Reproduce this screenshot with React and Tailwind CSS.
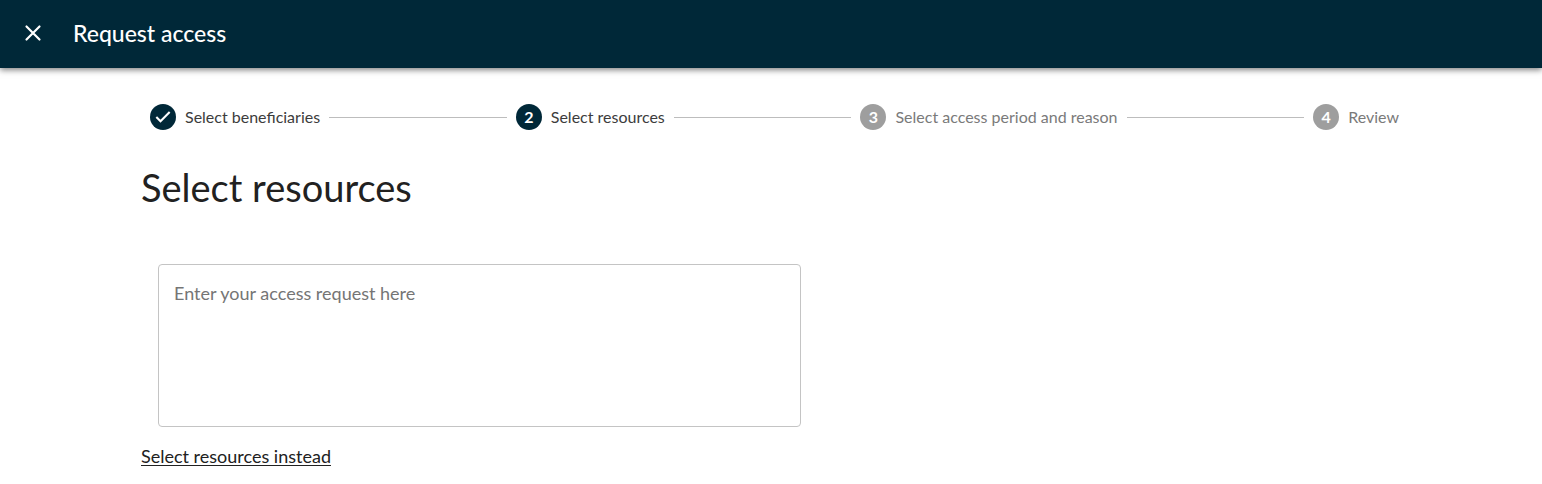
import React, { useState } from 'react';
import clsx from 'clsx';

const steps = [
  { label: 'Select beneficiaries', status: 'done' },
  { label: 'Select resources', status: 'active' },
  { label: 'Select access period and reason', status: 'pending' },
  { label: 'Review', status: 'pending' },
];

const CloseIcon = () => (
  <svg viewBox="0 0 24 24" className="h-6 w-6" fill="none" stroke="currentColor" strokeWidth="2.2" strokeLinecap="round" aria-hidden="true">
    <path d="M5.5 5.5l13 13M18.5 5.5l-13 13" />
  </svg>
);

const CheckIcon = () => (
  <svg viewBox="0 0 24 24" className="h-5 w-5" fill="none" stroke="currentColor" strokeWidth="2.5" aria-hidden="true">
    <path d="M4 12l5 5L20 6" />
  </svg>
);

const Step = ({ number, label, status }) => (
  <li
    className="flex shrink-0 items-center gap-[9px] px-[9px]"
    aria-current={status === 'active' ? 'step' : undefined}
  >
    <span
      className={clsx(
        'flex h-[26px] w-[26px] items-center justify-center rounded-full text-base font-bold text-white',
        status === 'pending' ? 'bg-[#9e9e9e]' : 'bg-[#002838]'
      )}
    >
      {status === 'done' ? <CheckIcon /> : number}
    </span>
    <span className={clsx('text-base leading-5', status === 'pending' ? 'text-[#7a7a7a]' : 'text-[#3c3c3c]')}>
      {label}
    </span>
  </li>
);

const App = () => {
  const [request, setRequest] = useState('');

  return (
    <div className="min-h-screen bg-white font-[Lato,sans-serif] text-[#212121]">
      <header className="flex h-[68px] items-center gap-7 bg-[#002838] px-[21px] pb-0.5 text-white shadow-[0_2px_6px_rgba(0,0,0,0.5)]">
        <button type="button" aria-label="Close">
          <CloseIcon />
        </button>
        <h1 className="text-[23px] leading-7 font-medium">Request access</h1>
      </header>

      <main className="pt-9 pr-[134px] pl-[141px]">
        <ol className="flex items-center">
          {steps.map((step, index) => (
            <React.Fragment key={step.label}>
              {index > 0 && <li className="h-px flex-1 bg-[#bdbdbd]" aria-hidden="true" />}
              <Step number={index + 1} label={step.label} status={step.status} />
            </React.Fragment>
          ))}
        </ol>

        <h2 className="mt-8 text-[38px] leading-[50px]">Select resources</h2>

        <div className="mt-[52px] pl-[17px]">
          <textarea
            aria-label="Access request"
            value={request}
            onChange={(e) => setRequest(e.target.value)}
            placeholder="Enter your access request here"
            className="block h-[163px] w-[643px] max-w-full resize-none rounded border border-[#c4c4c4] px-[15px] py-4 text-lg leading-6 placeholder:text-[#757575]"
          />
        </div>

        <a href="#resources" className="mt-[17px] inline-block text-lg leading-6 underline underline-offset-2">
          Select resources instead
        </a>
      </main>
    </div>
  );
};

export default App;
